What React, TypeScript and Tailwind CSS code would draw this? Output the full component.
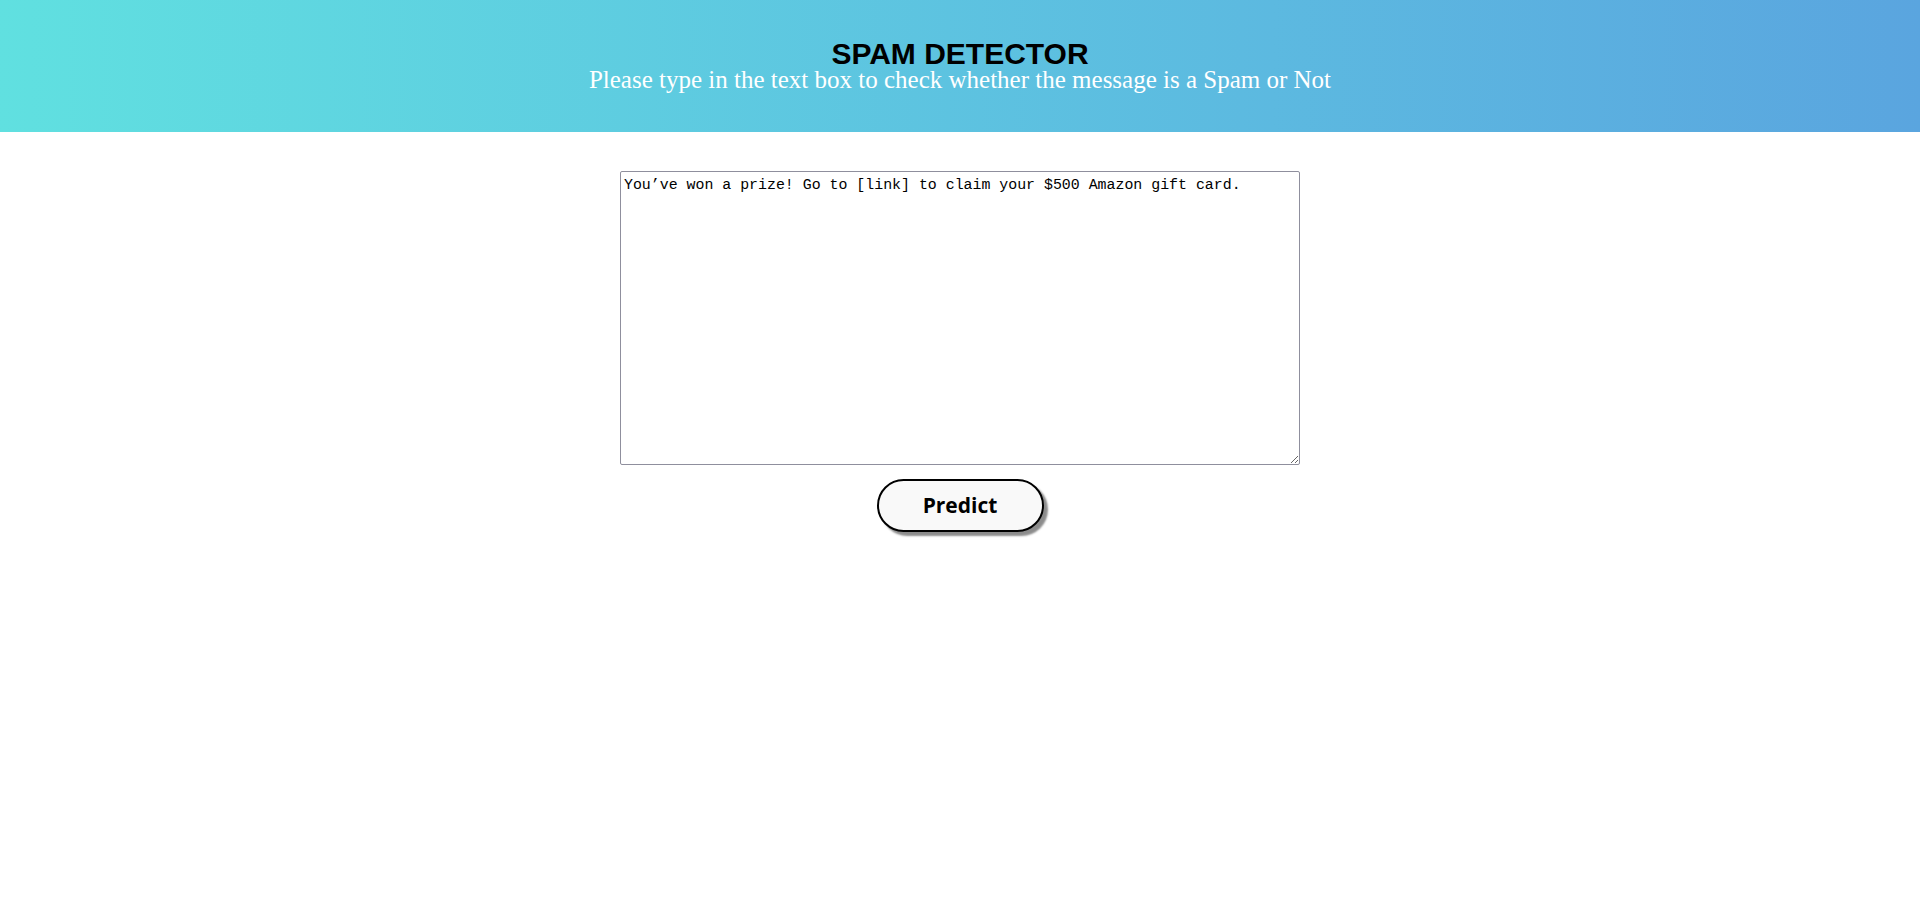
import { useState } from "react";

export default function App() {
  const [message, setMessage] = useState(
    "You’ve won a prize! Go to [link] to claim your $500 Amazon gift card."
  );

  return (
    <div className="min-h-screen bg-white">
      {/* Header */}
      <header className="h-[132px] bg-linear-to-r from-[#60e0e0] to-[#5aa5df] pt-[40px] text-center">
        <h1 className="font-['Liberation_Sans',Arial,sans-serif] text-[30px] leading-[28px] font-bold text-black">
          SPAM DETECTOR
        </h1>
        <p className="font-['Liberation_Serif','Times_New_Roman',serif] text-[25px] leading-[24px] text-white">
          Please type in the text box to check whether the message is a Spam or Not
        </p>
      </header>

      {/* Form */}
      <main className="flex flex-col items-center pt-[39px]">
        <textarea
          value={message}
          onChange={(e) => setMessage(e.target.value)}
          className="h-[294px] w-[680px] rounded-[2px] border border-[#8f8f9d] px-[3px] pt-[5px] pb-[2px] font-['Liberation_Mono','Courier_New',monospace] text-[14.9px] leading-[17px] text-black"
        />
        <button className="mt-[14px] h-[53px] w-[167px] rounded-full border-2 border-black bg-[#f9f9f9] font-['Open_Sans',sans-serif] text-[21px] font-bold text-black shadow-[4px_4px_2px_rgba(0,0,0,0.45)]">
          Predict
        </button>
      </main>
    </div>
  );
}
